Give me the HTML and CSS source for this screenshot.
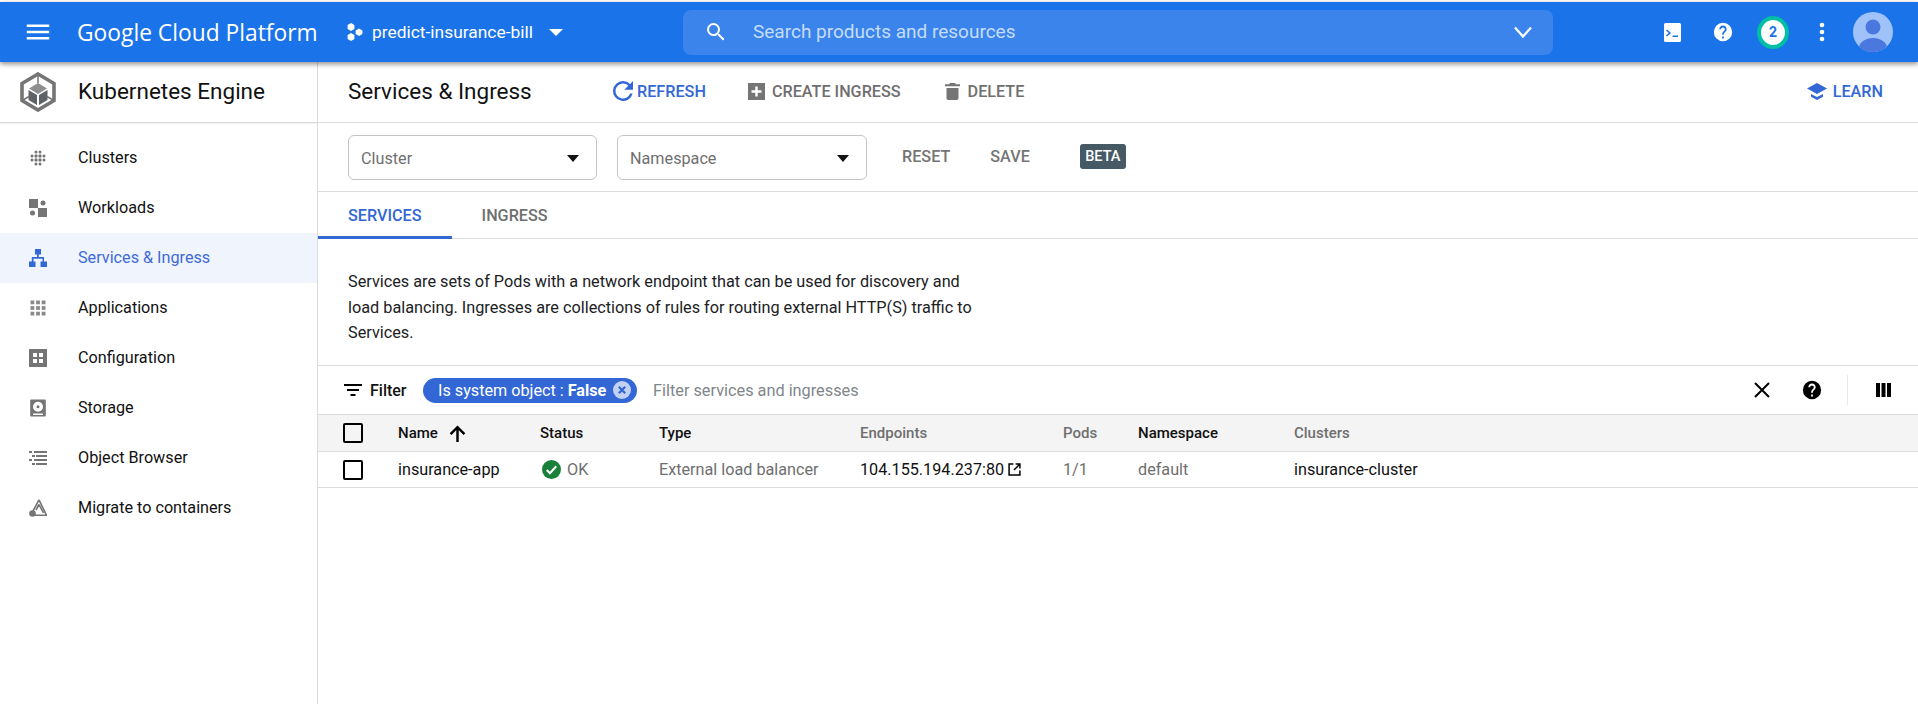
FILE: index.html
```html
<!DOCTYPE html>
<html lang="en">
<head>
<meta charset="utf-8">
<title>Services &amp; Ingress</title>
<link rel="stylesheet" href="styles.css">
</head>
<body>
<header class="topbar">
  <svg class="menu-icon" viewBox="0 0 24 24"><path d="M3 18h18v-2H3zM3 13h18v-2H3zM3 6v2h18V6z"/></svg>
  <span class="brand">Google Cloud Platform</span>
  <svg class="project-icon" viewBox="0 0 16 18"><path d="M4 0l3.400 2v4L4 8 .6 6V2zM4 10l3.400 2v4L4 18 .6 16v-4zM12 5.500l3.400 2v3.500l-3.400 2-3.400-2V7.500z"/></svg>
  <span class="project">predict-insurance-bill</span>
  <span class="caret caret-white"></span>
  <div class="search">
    <svg class="search-icon" viewBox="0 0 24 24"><path d="M15.500 14h-.79l-.28-.27A6.470 6.470 0 0 0 16 9.500 6.500 6.500 0 1 0 9.500 16c1.610 0 3.090-.59 4.230-1.570l.27.28v.79l5 4.990L20.490 19zm-6 0C7.010 14 5 11.990 5 9.500S7.010 5 9.500 5 14 7.010 14 9.500 11.990 14 9.500 14z"/></svg>
    <span class="search-text">Search products and resources</span>
    <svg class="search-chevron" viewBox="0 0 24 24"><path d="M4 7.500l8 9 8-9" fill="none" stroke="#fff" stroke-width="2.200"/></svg>
  </div>
  <svg class="top-terminal" viewBox="0 0 17 19"><path fill-rule="evenodd" d="M1.500 0h14A1.500 1.500 0 0 1 17 1.500v16a1.500 1.500 0 0 1-1.500 1.500h-14A1.500 1.500 0 0 1 0 17.500v-16A1.500 1.500 0 0 1 1.500 0zM3 6.500l-1 1 2.800 2.500L2 12.500l1 1 4-3.500zM8.500 12.500V14H14v-1.500z"/></svg>
  <svg class="top-help" viewBox="0 0 24 24"><path d="M12 2a10 10 0 1 0 0 20 10 10 0 0 0 0-20zm1 17h-2v-2h2zm2.070-7.750-.9.920C13.450 12.900 13 13.500 13 15h-2v-.5c0-1.100.45-2.100 1.170-2.830l1.240-1.260c.37-.36.590-.86.590-1.410 0-1.100-.9-2-2-2s-2 .9-2 2H8c0-2.210 1.790-4 4-4s4 1.790 4 4c0 .88-.36 1.680-.93 2.250z"/></svg>
  <span class="notify">2</span>
  <svg class="top-more" viewBox="0 0 8 24"><circle cx="4" cy="5" r="2.300"/><circle cx="4" cy="12" r="2.300"/><circle cx="4" cy="19" r="2.300"/></svg>
  <svg class="avatar" viewBox="0 0 40 40"><defs><clipPath id="avatar-clip"><circle cx="20" cy="20" r="20"/></clipPath></defs><circle cx="20" cy="20" r="20" fill="#a0c2fb"/><g clip-path="url(#avatar-clip)" fill="#4a78de"><circle cx="20" cy="15" r="7.500"/><ellipse cx="20" cy="36" rx="14" ry="10"/></g></svg>
</header>

<div class="shell">
  <aside class="sidebar">
    <div class="side-head">
      <svg class="ke-logo" viewBox="0 0 36 40">
        <path d="M18 2 34 11.500v17L18 38 2 28.500v-17z" fill="none" stroke="#757575" stroke-width="3.600"/>
        <path d="M18 11l9 5.500-9 5.500-9-5.500z" fill="#8f8f8f"/>
        <path d="M8.500 18l8.500 5v10l-8.500-5zM27.500 18L19 23v10l8.500-5z" fill="#5f6368"/>
        <path d="M3 28l6-3.500M33 28l-6-3.500M18 3v8" stroke="#757575" stroke-width="1.500"/>
      </svg>
      <span class="side-title">Kubernetes Engine</span>
    </div>
    <nav class="side-nav">
      <a class="nav-item">
        <svg class="nav-icon" viewBox="0 0 18 18"><g fill="#757575"><circle cx="7" cy="3" r="1.500"/><circle cx="11" cy="3" r="1.500"/><circle cx="3" cy="7" r="1.500"/><circle cx="7" cy="7" r="1.700"/><circle cx="11" cy="7" r="1.700"/><circle cx="15" cy="7" r="1.500"/><circle cx="3" cy="11" r="1.500"/><circle cx="7" cy="11" r="1.700"/><circle cx="11" cy="11" r="1.700"/><circle cx="15" cy="11" r="1.500"/><circle cx="7" cy="15" r="1.500"/><circle cx="11" cy="15" r="1.500"/></g></svg>
        <span class="nav-label">Clusters</span>
      </a>
      <a class="nav-item">
        <svg class="nav-icon" viewBox="0 0 18 18"><g fill="#757575"><rect x="0" y="0" width="9" height="9"/><circle cx="14" cy="4" r="2.500"/><circle cx="3.500" cy="14" r="2.500"/><rect x="9" y="9" width="9" height="9"/></g></svg>
        <span class="nav-label">Workloads</span>
      </a>
      <a class="nav-item nav-active">
        <svg class="nav-icon" viewBox="0 0 18 18"><path fill="#3367d6" d="M6 0h6v5.500H9.800V8H15v4.500h3V18h-6.500v-5.500h2V9.800H4.500v2.700h2V18H0v-5.500h2.800V8h5.200V5.500H6z"/></svg>
        <span class="nav-label">Services &amp; Ingress</span>
      </a>
      <a class="nav-item">
        <svg class="nav-icon" viewBox="0 0 18 18"><g fill="#8a8a8a"><rect x="1.500" y="1.500" width="3.800" height="3.800"/><rect x="7.100" y="1.500" width="3.800" height="3.800"/><rect x="12.700" y="1.500" width="3.800" height="3.800"/><rect x="1.500" y="7.100" width="3.800" height="3.800"/><rect x="7.100" y="7.100" width="3.800" height="3.800"/><rect x="12.700" y="7.100" width="3.800" height="3.800"/><rect x="1.500" y="12.700" width="3.800" height="3.800"/><rect x="7.100" y="12.700" width="3.800" height="3.800"/><rect x="12.700" y="12.700" width="3.800" height="3.800"/></g></svg>
        <span class="nav-label">Applications</span>
      </a>
      <a class="nav-item">
        <svg class="nav-icon" viewBox="0 0 18 18"><path fill="#757575" fill-rule="evenodd" d="M0 0h18v18H0zM4 4v4h4V4zM10 4v4h4V4zM4 10v4h4v-4zM10 10v4h4v-4z"/></svg>
        <span class="nav-label">Configuration</span>
      </a>
      <a class="nav-item">
        <svg class="nav-icon" viewBox="0 0 18 18"><path fill="#757575" fill-rule="evenodd" d="M2 .5h14a.8.8 0 0 1 .8.8v15.400a.8.8 0 0 1-.8.8H2a.8.8 0 0 1-.8-.8V1.300A.8.8 0 0 1 2 .5zM9 2.800a5 5 0 1 0 0 10 5 5 0 0 0 0-10zM9 6.300a1.500 1.500 0 1 1 0 3 1.500 1.500 0 0 1 0-3zM4 14.500V16h10v-1.500z"/></svg>
        <span class="nav-label">Storage</span>
      </a>
      <a class="nav-item">
        <svg class="nav-icon" viewBox="0 0 18 18"><g fill="#757575"><rect x="0" y="2" width="3" height="2"/><rect x="5" y="2" width="13" height="2"/><rect x="3" y="6" width="3" height="2"/><rect x="7" y="6" width="11" height="2"/><rect x="0" y="10" width="3" height="2"/><rect x="5" y="10" width="13" height="2"/><rect x="3" y="14" width="3" height="2"/><rect x="7" y="14" width="11" height="2"/></g></svg>
        <span class="nav-label">Object Browser</span>
      </a>
      <a class="nav-item">
        <svg class="nav-icon" viewBox="0 0 18 18"><path fill="none" stroke="#757575" stroke-width="1.600" d="M10 .8 17.500 16.300H6M10 5.500 14.500 14M10 5.500 7 11M10 .8 4 12"/><circle cx="3.500" cy="14.500" r="3.300" fill="#757575"/></svg>
        <span class="nav-label">Migrate to containers</span>
      </a>
    </nav>
  </aside>

  <main class="content">
    <div class="toolbar">
      <h1 class="page-title">Services &amp; Ingress</h1>
      <button class="tool tool-blue tool-refresh">
        <svg class="tool-icon-refresh" viewBox="0 0 24 24"><path fill="#3367d6" d="M17.650 6.350A7.960 7.960 0 0 0 12 4a8 8 0 1 0 7.730 10h-2.080A6 6 0 1 1 12 6c1.660 0 3.140.69 4.220 1.780L13 11h7V4z"/></svg>
        REFRESH
      </button>
      <button class="tool tool-create">
        <svg class="tool-icon" viewBox="0 0 17 17"><path fill="#757575" fill-rule="evenodd" d="M0 0h17v17H0zM7.300 3.500v3.800H3.500v2.400h3.800v3.800h2.400V9.700h3.800V7.300H9.700V3.500z"/></svg>
        CREATE INGRESS
      </button>
      <button class="tool tool-delete">
        <svg class="tool-icon-del" viewBox="0 0 15 17"><path fill="#757575" d="M1.500 5h12v10.300a1.700 1.700 0 0 1-1.700 1.700H3.200a1.700 1.700 0 0 1-1.700-1.700zM5 0h5l1 1.200h4v2H0v-2h4z"/></svg>
        DELETE
      </button>
      <button class="tool tool-blue tool-learn">
        <svg class="tool-icon-learn" viewBox="0 0 20 17"><path fill="#3367d6" d="M10 0l10 5.500L10 11 0 5.500zM4 11l6 3 6-3v2.800L10 17l-6-3.200z"/></svg>
        LEARN
      </button>
    </div>

    <div class="filters">
      <div class="select select-cluster"><span>Cluster</span><i class="caret caret-dark"></i></div>
      <div class="select select-namespace"><span>Namespace</span><i class="caret caret-dark"></i></div>
      <button class="plain plain-reset">RESET</button>
      <button class="plain plain-save">SAVE</button>
      <span class="beta">BETA</span>
    </div>

    <div class="tabs">
      <span class="tab tab-active">SERVICES</span>
      <span class="tab">INGRESS</span>
    </div>

    <p class="intro">Services are sets of Pods with a network endpoint that can be used for discovery and load balancing. Ingresses are collections of rules for routing external HTTP(S) traffic to Services.</p>

    <div class="filterbar">
      <svg class="filter-icon" viewBox="0 0 18 12"><path d="M0 0h18v2H0zM3 5h12v2H3zM6.500 10h5v2h-5z"/></svg>
      <span class="filter-label">Filter</span>
      <span class="chip">Is system object : <b>False</b>
        <svg class="chip-x" viewBox="0 0 18 18"><circle cx="9" cy="9" r="9" fill="#c2d1f3"/><path d="M5.800 5.800l6.400 6.400M12.200 5.800l-6.400 6.400" stroke="#3367d6" stroke-width="2.200"/></svg>
      </span>
      <span class="filter-hint">Filter services and ingresses</span>
      <svg class="fb-close" viewBox="0 0 16 16"><path d="M1 1l14 14M15 1 1 15" stroke="#000" stroke-width="2" fill="none"/></svg>
      <svg class="fb-help" viewBox="0 0 24 24"><path d="M12 2a10 10 0 1 0 0 20 10 10 0 0 0 0-20zm1 17h-2v-2h2zm2.070-7.750-.9.920C13.450 12.900 13 13.500 13 15h-2v-.5c0-1.100.45-2.100 1.170-2.830l1.240-1.260c.37-.36.590-.86.590-1.410 0-1.100-.9-2-2-2s-2 .9-2 2H8c0-2.210 1.790-4 4-4s4 1.790 4 4c0 .88-.36 1.680-.93 2.250z"/></svg>
      <span class="fb-divider"></span>
      <svg class="fb-columns" viewBox="0 0 15 14"><path d="M0 0h4v14H0zM5.500 0h4v14h-4zM11 0h4v14h-4z"/></svg>
    </div>

    <div class="row row-head">
      <span class="check"></span>
      <span class="cell-dark name-head">Name
        <svg class="sort-arrow" viewBox="0 0 16 16"><path d="M8 16V2M1.500 8.500 8 2l6.500 6.500" fill="none" stroke="#000" stroke-width="2.300"/></svg>
      </span>
      <span class="cell-dark">Status</span>
      <span class="cell-dark">Type</span>
      <span>Endpoints</span>
      <span>Pods</span>
      <span class="cell-dark">Namespace</span>
      <span>Clusters</span>
    </div>
    <div class="row row-body">
      <span class="check"></span>
      <span class="cell-dark">insurance-app</span>
      <span class="status">
        <svg class="ok-icon" viewBox="0 0 18 18"><circle cx="9" cy="9" r="9" fill="#188038"/><path d="M4.500 9.500l3 3 6-6.500" fill="none" stroke="#fff" stroke-width="2"/></svg>
        OK
      </span>
      <span>External load balancer</span>
      <span class="cell-dark endpoint">104.155.194.237:80
        <svg class="ext-icon" viewBox="0 0 12 12"><path d="M5 1H1v10h10V7M7 1h4v4M11 1 5.500 6.500" fill="none" stroke="#000" stroke-width="1.400"/></svg>
      </span>
      <span>1/1</span>
      <span>default</span>
      <span class="cell-dark">insurance-cluster</span>
    </div>
  </main>
</div>
</body>
</html>
```
FILE: styles.css
```css
* { box-sizing: border-box; }
html, body { margin: 0; height: 100%; }
body {
  padding-top: 2px;
  height: 704px;
  overflow: hidden;
  background: #fff;
  font-family: Roboto, "Liberation Sans", sans-serif;
  font-size: 14px;
  color: #202124;
}
button {
  border: 0;
  background: none;
  padding: 0;
  font: inherit;
  display: flex;
  align-items: center;
}

/* Top bar */
.topbar {
  position: relative;
  z-index: 2;
  height: 60px;
  background: #1a73e8;
  color: #fff;
  display: flex;
  align-items: center;
  box-shadow: 0 2px 5px rgba(0, 0, 0, .45);
}
.topbar svg { fill: #fff; flex: none; }
.menu-icon { width: 30px; height: 30px; margin-left: 23px; }
.brand {
  margin-left: 24px;
  font-family: "Open Sans", Roboto, sans-serif;
  font-size: 22.800px;
  width: 270px;
  white-space: nowrap;
}
.project-icon { width: 16px; height: 18px; }
.project { margin-left: 9px; font-size: 17.400px; font-weight: 400; width: 167px; white-space: nowrap; }
.caret { display: block; width: 0; height: 0; border-style: solid; border-color: transparent; }
.caret-white { border-width: 7px 7px 0; border-top-color: #fff; margin-left: 10px; }
.caret-dark { border-width: 7px 6.500px 0; border-top-color: #111; }
.search {
  margin-left: 120px;
  width: 870px;
  height: 45px;
  border-radius: 8px;
  background: #3a84ec;
  display: flex;
  align-items: center;
}
.search-icon { width: 24px; height: 24px; margin-left: 21px; }
.search-text { margin-left: 25px; font-size: 19px; color: #c6dcfb; flex: 1; margin-top: -2px; }
.search-chevron { width: 24px; height: 24px; margin-right: 18px; }
.top-terminal { width: 17px; height: 19px; margin-left: 111px; }
.top-help { width: 22px; height: 24px; margin-left: 31px; }
.notify {
  margin-left: 23px;
  width: 32px;
  height: 33px;
  border-radius: 50%;
  background: #fff;
  border: 4px solid #00bfa5;
  color: #1a73e8;
  font-size: 14px;
  font-weight: 700;
  display: flex;
  align-items: center;
  justify-content: center;
}
.top-more { width: 8px; height: 24px; margin-left: 29px; }
.avatar { width: 40px; height: 40px; margin-left: 27px; }

/* Shell */
.shell { display: flex; height: 642px; }
.sidebar { width: 318px; flex: none; border-right: 1px solid #dadce0; }
.content { flex: 1; min-width: 0; }

/* Sidebar */
.side-head {
  height: 61px;
  display: flex;
  align-items: center;
  border-bottom: 1px solid #dadce0;
  box-shadow: 0 1px 1px rgba(0, 0, 0, .06);
}
.ke-logo { width: 36px; height: 40px; margin-left: 20px; }
.side-title { margin: -2px 0 0 22px; font-size: 22.500px; color: #111; }
.side-nav { padding-top: 10px; }
.nav-item {
  height: 50px;
  display: flex;
  align-items: center;
  padding-left: 29px;
  font-size: 16.200px;
  color: #111;
}
.nav-icon { width: 18px; height: 18px; flex: none; margin-right: 31px; }
.nav-label { margin-top: -2px; }
.nav-active { background: #eff4fd; color: #3f6bd8; }

/* Toolbar */
.toolbar {
  height: 61px;
  display: flex;
  align-items: center;
  padding-left: 30px;
  border-bottom: 1px solid #dadce0;
}
.page-title { margin: -2px 0 0; font-weight: 400; font-size: 22.500px; color: #111; width: 260px; white-space: nowrap; }
.tool { font-size: 16.200px; color: #6f6f6f; font-weight: 500; margin-top: -2px; }
.tool-blue { color: #3367d6; }
.tool-icon-refresh { width: 30px; height: 30px; margin-right: -1px; }
.tool-create { margin-left: 42px; }
.tool-icon { width: 17px; height: 17px; margin-right: 7px; }
.tool-delete { margin-left: 44px; }
.tool-icon-del { width: 15px; height: 17px; margin-right: 8px; }
.tool-learn { margin-left: auto; margin-right: 35px; }
.tool-icon-learn { width: 20px; height: 17px; margin-right: 6px; }

/* Cluster filters */
.filters {
  height: 69px;
  display: flex;
  align-items: center;
  padding-left: 30px;
  border-bottom: 1px solid #dadce0;
}
.select {
  width: 249px;
  height: 45px;
  margin-top: 1px;
  border: 1px solid #c4c4c4;
  border-radius: 6px;
  padding: 2px 17px 0 12px;
  display: flex;
  align-items: center;
  justify-content: space-between;
  font-size: 16.200px;
  color: #6f6f6f;
}
.select-namespace { margin-left: 20px; width: 250px; }
.plain { font-size: 16.200px; font-weight: 500; color: #757575; margin-top: -2px; }
.plain-reset { margin-left: 35px; }
.plain-save { margin-left: 40px; }
.beta {
  margin-left: 50px;
  margin-top: -1px;
  width: 46px;
  height: 25px;
  background: #455a64;
  color: #fff;
  border-radius: 3px;
  font-size: 14.500px;
  font-weight: 500;
  display: flex;
  align-items: center;
  justify-content: center;
}

/* Tabs */
.tabs { height: 47px; display: flex; border-bottom: 1px solid #dadce0; }
.tab {
  display: flex;
  align-items: center;
  font-size: 16.200px;
  font-weight: 500;
  color: #6f6f6f;
  padding: 2px 30px 0;
  border-bottom: 3px solid transparent;
  margin-bottom: -1px;
}
.tab-active { color: #3367d6; border-bottom-color: #3367d6; }

/* Intro */
.intro {
  margin: 0;
  height: 126px;
  padding: 30px 0 0 30px;
  width: 660px;
  font-size: 16.250px;
  line-height: 25.500px;
  color: #202124;
}

/* Filter bar */
.filterbar {
  height: 50px;
  display: flex;
  align-items: center;
  padding-left: 26px;
  border-top: 1px solid #dadce0;
  border-bottom: 1px solid #dadce0;
}
.filter-icon { width: 18px; height: 12px; flex: none; }
.filter-label { margin-left: 8px; width: 36px; font-size: 16px; font-weight: 500; color: #111; }
.chip {
  margin-left: 17px;
  width: 214px;
  height: 25px;
  border-radius: 13px;
  background: #3367d6;
  color: #fff;
  padding-left: 15px;
  font-size: 16.200px;
  display: flex;
  align-items: center;
  white-space: pre;
}
.chip b { font-weight: 700; }
.chip-x { width: 18px; height: 18px; margin-left: 7px; flex: none; }
.filter-hint { margin-left: 16px; font-size: 16.300px; color: #80868b; flex: 1; }
.fb-close { width: 16px; height: 16px; flex: none; }
.fb-help { width: 22px; height: 22px; flex: none; margin-left: 31px; }
.fb-divider { width: 1px; height: 30px; background: #e8e8e8; margin-left: 24px; }
.fb-columns { width: 15px; height: 14px; flex: none; margin: 0 27px 0 28px; }

/* Table rows */
.row {
  display: grid;
  grid-template-columns: 80px 142px 119px 201px 203px 75px 156px 1fr;
  align-items: center;
  border-bottom: 1px solid #dadce0;
  font-size: 16.200px;
  color: #6f6f6f;
}
.row-head { height: 37px; background: #f4f4f4; font-size: 15px; font-weight: 500; }
.row-body { height: 36px; }
.cell-dark { color: #111; }
.check {
  width: 20px;
  height: 20px;
  margin-left: 25px;
  border: 2px solid #000;
  border-radius: 2px;
}
.name-head { display: flex; align-items: center; }
.sort-arrow { width: 17px; height: 17px; margin-left: 11px; flex: none; }
.status { display: flex; align-items: center; padding-left: 2px; }
.ok-icon { width: 19px; height: 19px; margin-right: 6px; flex: none; }
.endpoint { display: flex; align-items: center; }
.ext-icon { width: 13px; height: 13px; margin-left: 4px; flex: none; }
```
